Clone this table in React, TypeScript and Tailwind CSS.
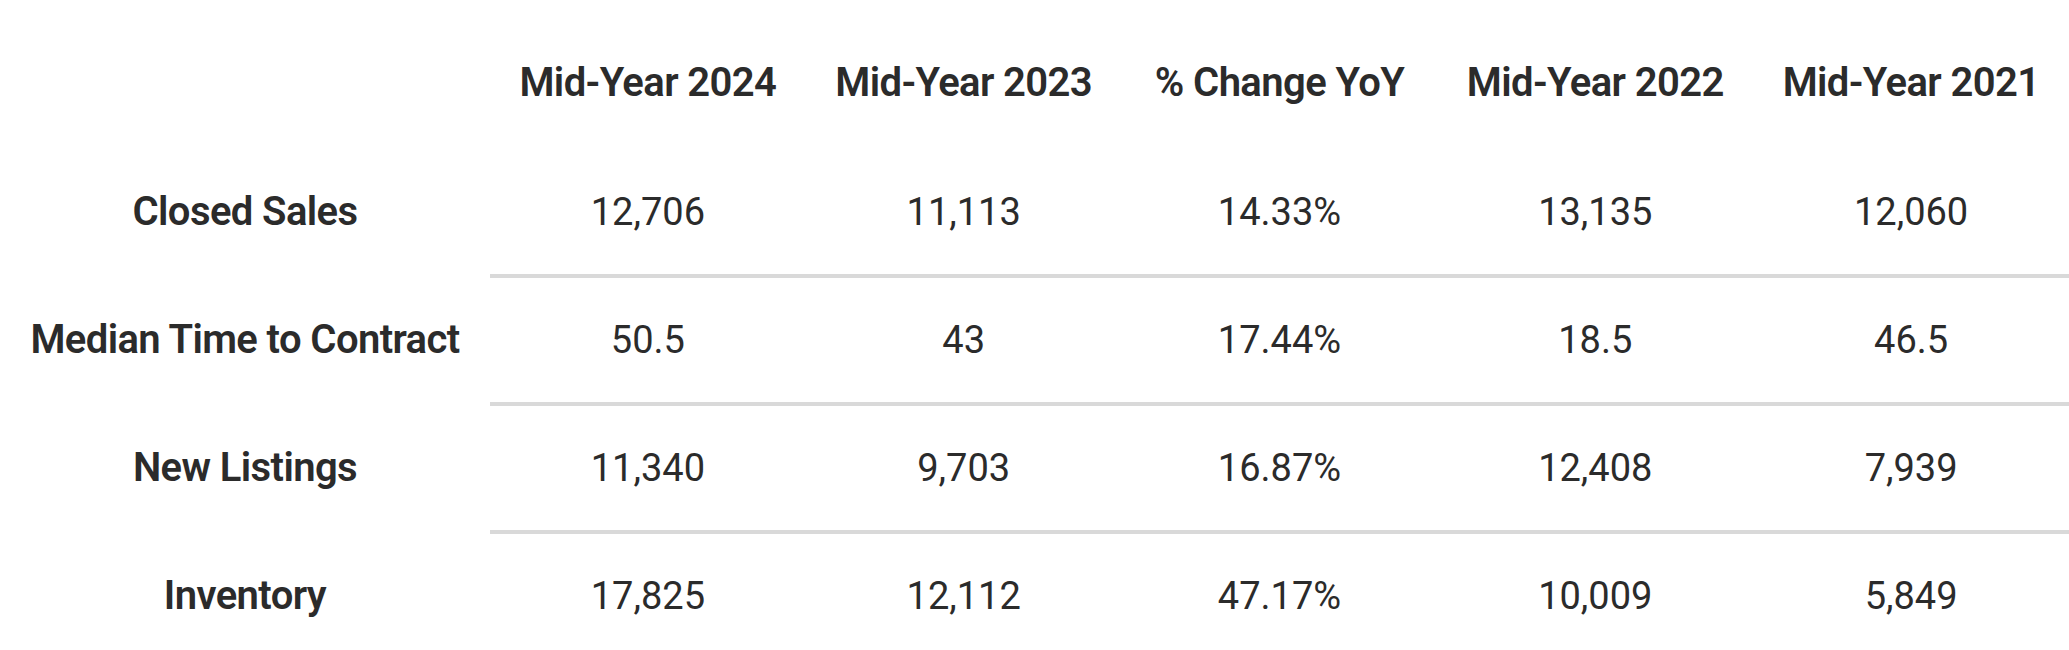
const headers = ['Mid-Year 2024', 'Mid-Year 2023', '% Change YoY', 'Mid-Year 2022', 'Mid-Year 2021'];

const rows = [
  { label: 'Closed Sales', values: ['12,706', '11,113', '14.33%', '13,135', '12,060'] },
  { label: 'Median Time to Contract', values: ['50.5', '43', '17.44%', '18.5', '46.5'] },
  { label: 'New Listings', values: ['11,340', '9,703', '16.87%', '12,408', '7,939'] },
  { label: 'Inventory', values: ['17,825', '12,112', '47.17%', '10,009', '5,849'] },
];

export default function App() {
  return (
    <div className="w-full bg-white text-[#2b2b2b] font-['Roboto',sans-serif]">
      <div className="grid grid-cols-[490px_repeat(5,1fr)]">
        <div className="h-[150px]" />
        {headers.map((h) => (
          <div key={h} className="h-[150px] pt-4 flex items-center justify-center text-[40px] font-semibold tracking-[-0.6px]">
            {h}
          </div>
        ))}

        {rows.map((row, i) => {
          const last = i === rows.length - 1;
          return [
            <div key={row.label} className="h-[128px] flex items-center justify-center text-[40px] font-semibold tracking-[-0.6px] pb-1">
              {row.label}
            </div>,
            ...row.values.map((v, j) => (
              <div
                key={row.label + j}
                className={`h-[128px] flex items-center justify-center text-[38px] ${last ? 'pb-1' : 'border-b-4 border-[#d9d9d9]'}`}
              >
                {v}
              </div>
            )),
          ];
        })}
      </div>
    </div>
  );
}
